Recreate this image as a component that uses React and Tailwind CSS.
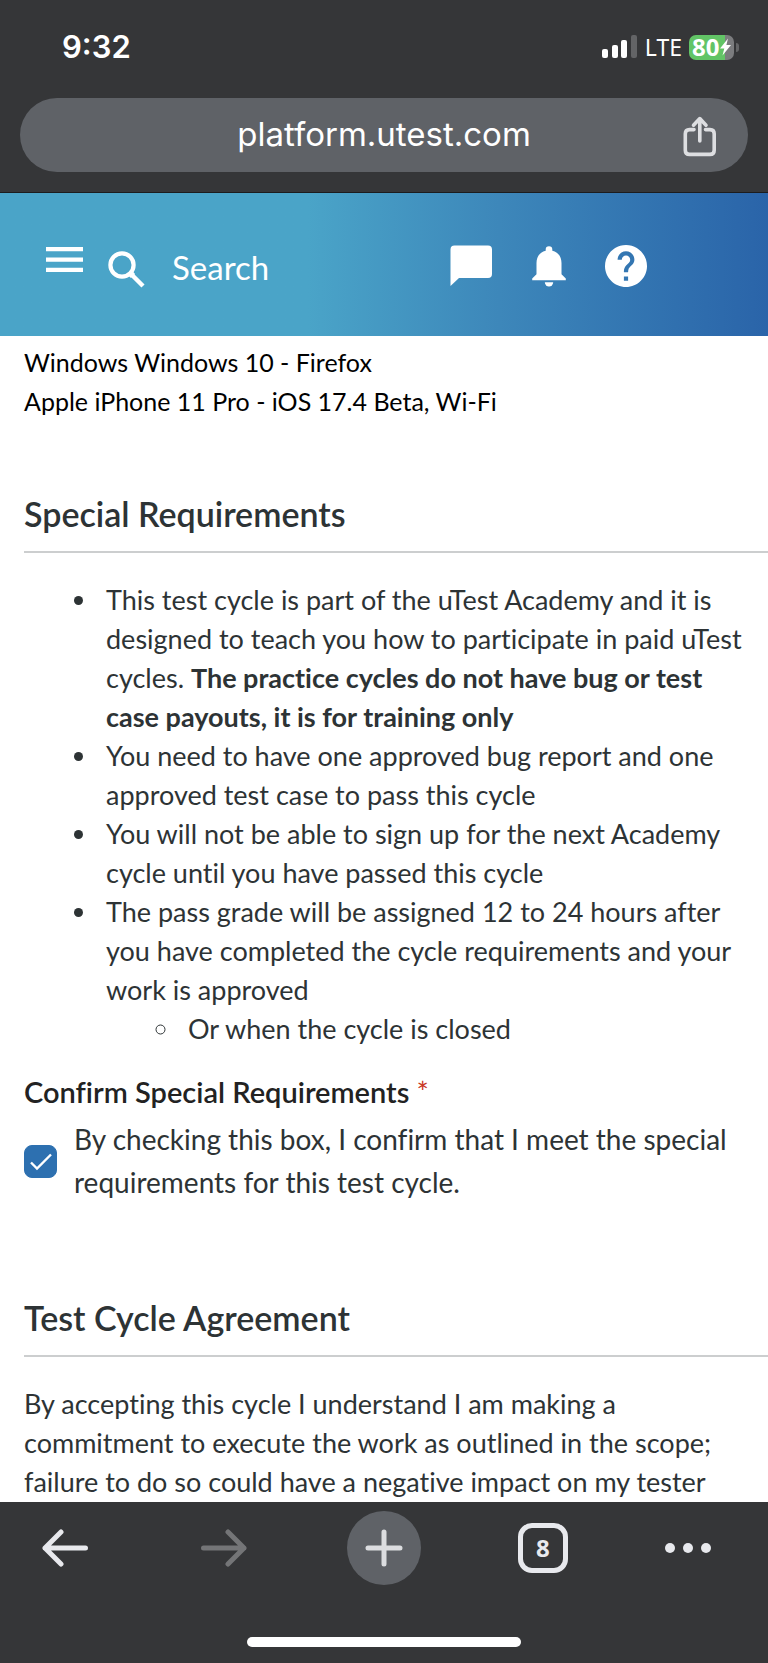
import React from "react";

function StatusBar() {
  return (
    <div className="flex h-[98px] items-start justify-between pt-[25px] pl-[62px] pr-[29px] text-white">
      <span className="font-['Inter',sans-serif] text-[31px] leading-[44px] font-semibold">9:32</span>
      <div className="flex h-[44px] items-center gap-[7px]">
        <svg width="36" height="24" viewBox="0 0 36 24" fill="#fff" aria-hidden="true">
          <rect x="0" y="14" width="6" height="9" rx="2" />
          <rect x="10" y="10" width="6" height="13" rx="2" />
          <rect x="19" y="5" width="6" height="18" rx="2" />
          <rect x="29" y="0" width="6" height="23" rx="2" fill="#636466" />
        </svg>
        <span className="font-['Noto_Sans',sans-serif] text-[23px] leading-6">LTE</span>
        <div className="flex items-center gap-[2px]">
          <div className="flex h-[25px] w-[45px] items-center rounded-[7px] bg-linear-to-r from-[#62c466] from-80% to-[#7b7c7e] to-80% pl-[3px]">
            <span className="font-['Open_Sans',sans-serif] text-2xl leading-6 font-bold">80</span>
            <svg width="12" height="18" viewBox="0 0 12 18" fill="#fff" aria-hidden="true">
              <path d="M9 0.5 1 10.5h4.3L3.5 17.5 12 7H7.4Z" />
            </svg>
          </div>
          <div className="h-[9px] w-[3px] rounded-r-full bg-[#636466]" />
        </div>
      </div>
    </div>
  );
}

function AddressBar() {
  return (
    <div className="mx-5 mb-5 grid h-[74px] grid-cols-[96px_1fr_96px] items-center rounded-full bg-[#5f6267] text-white">
      <a href="#url" className="col-start-2 pb-[2px] text-center font-['Inter',sans-serif] text-[33px] leading-10">
        platform.utest.com
      </a>
      <button type="button" aria-label="Share" className="flex h-full items-center justify-center pt-1">
        <svg width="34" height="42" viewBox="0 0 34 42" fill="none" stroke="#dddee1" strokeWidth="3.6" strokeLinecap="round" strokeLinejoin="round" aria-hidden="true">
          <path d="M11 13.6H6.5Q2.3 13.6 2.3 17.8V34.2Q2.3 38.4 6.5 38.4H27Q31.2 38.4 31.2 34.2V17.8Q31.2 13.6 27 13.6H22.5" />
          <path d="M16.8 25V3.5M10.5 9.2 16.8 2.6 23 9.2" />
        </svg>
      </button>
    </div>
  );
}

function SiteHeader() {
  return (
    <header className="flex h-[143px] items-center bg-linear-to-r from-[#4aa4c8] from-40% via-[#3d87ba] via-65% to-[#2a64a9] pl-[46px] text-white">
      <button type="button" aria-label="Menu" className="pb-[10px]">
        <svg width="37" height="26" viewBox="0 0 37 26" fill="#fff" aria-hidden="true">
          <path d="M0 0h37v4.3H0zM0 10.4h37v4.3H0zM0 20.8h37v4.3H0z" />
        </svg>
      </button>
      <label className="ml-6 flex min-w-0 flex-1 items-center gap-[27px] pt-2">
        <svg className="shrink-0" width="38" height="38" viewBox="0 0 38 38" fill="none" stroke="#fff" aria-hidden="true">
          <circle cx="15" cy="15" r="11.6" strokeWidth="4.2" />
          <path d="M23.5 23.5 36 36" strokeWidth="4.4" />
          <path d="M23 23l3 3" strokeWidth="6" />
        </svg>
        <input
          type="search"
          aria-label="Search"
          placeholder="Search"
          className="w-full min-w-0 bg-transparent pb-1 font-['Lato',sans-serif] text-[33px] leading-10 outline-none placeholder:text-white"
        />
      </label>
      <div className="mr-[121px] flex items-center gap-[39px] pt-[3px]">
        <button type="button" aria-label="Messages">
          <svg width="43" height="42" viewBox="0 0 43 42" fill="#fff" aria-hidden="true">
            <path d="M4.5 0.5H38Q42 0.5 42 4.5V29Q42 33 38 33H9L0.5 41V4.5Q0.5 0.5 4.5 0.5Z" />
          </svg>
        </button>
        <button type="button" aria-label="Notifications">
          <svg width="34" height="42" viewBox="0 0 34 42" fill="#fff" aria-hidden="true">
            <path d="M17 1.2a3.3 3.3 0 0 1 3.3 3.3V5.8C26.5 7.3 29.5 12 29.5 18V29.2L33.8 33.6V35.2H0.2V33.6L4.5 29.2V18C4.5 12 7.5 7.3 13.7 5.8V4.5A3.3 3.3 0 0 1 17 1.2Z" />
            <path d="M12.8 37.2H21.2A4.2 4.2 0 0 1 12.8 37.2Z" />
          </svg>
        </button>
        <button type="button" aria-label="Help">
          <svg width="42" height="42" viewBox="2 2 20 20" fill="#fff" aria-hidden="true">
            <path d="M12 2C6.48 2 2 6.48 2 12s4.48 10 10 10 10-4.48 10-10S17.52 2 12 2zm1 17h-2v-2h2v2zm2.07-7.75-.9.92C13.45 12.9 13 13.5 13 15h-2v-.5c0-1.1.45-2.1 1.17-2.83l1.24-1.26c.37-.36.59-.86.59-1.41 0-1.1-.9-2-2-2s-2 .9-2 2H8c0-2.21 1.79-4 4-4s4 1.79 4 4c0 .88-.36 1.68-.93 2.25z" />
          </svg>
        </button>
      </div>
    </header>
  );
}

function SectionTitle({ children }) {
  return (
    <h2 className="border-b-2 border-[#cccecf] pb-[17px] text-[34px] leading-10 font-semibold">{children}</h2>
  );
}

function Content() {
  return (
    <main className="flex-1 overflow-hidden bg-white pt-[7px] pl-6 font-['Lato',sans-serif] text-[27px] leading-[39px] text-[#2d3335] [font-variant-ligatures:none]">
      <p className="text-[25px] text-black">
        Windows Windows 10 - Firefox
        <br />
        Apple iPhone 11 Pro - iOS 17.4 Beta, Wi-Fi
      </p>

      <section className="mt-[73px]">
        <SectionTitle>Special Requirements</SectionTitle>
        <ul className="list-disc pt-[27px] pr-5 pl-[75px] [&_li]:pl-[7px]">
          <li>
            This test cycle is part of the uTest Academy and it is designed to teach you how to participate in paid
            uTest cycles.{" "}
            <strong className="font-bold">
              The practice cycles do not have bug or test case payouts, it is for training only
            </strong>
          </li>
          <li>You need to have one approved bug report and one approved test case to pass this cycle</li>
          <li>You will not be able to sign up for the next Academy cycle until you have passed this cycle</li>
          <li>
            The pass grade will be assigned 12 to 24 hours after you have completed the cycle requirements and your
            work is approved
            <ul className="list-[circle] pl-[75px]">
              <li>Or when the cycle is closed</li>
            </ul>
          </li>
        </ul>

        <fieldset className="mt-6">
          <legend className="text-[29px] font-semibold text-[#222]">
            Confirm Special Requirements <span className="font-normal text-[#c9371f]">*</span>
          </legend>
          <div className="mt-[7px] flex items-center gap-[17px] pr-5">
            <span className="grid shrink-0">
              <input
                id="confirm"
                type="checkbox"
                defaultChecked
                className="peer col-start-1 row-start-1 size-[33px] appearance-none rounded-lg border border-[#2d70b0] checked:bg-[#2d70b0]"
              />
              <svg className="pointer-events-none col-start-1 row-start-1 hidden size-[33px] peer-checked:block" viewBox="0 0 33 33" fill="none" stroke="#fff" strokeWidth="2.4" aria-hidden="true">
                <path d="M7 17.5 13 23.5 27 9.5" />
              </svg>
            </span>
            <label htmlFor="confirm" className="text-[28px] leading-[43px]">
              By checking this box, I confirm that I meet the special requirements for this test cycle.
            </label>
          </div>
        </fieldset>
      </section>

      <section className="mt-[94px]">
        <SectionTitle>Test Cycle Agreement</SectionTitle>
        <p className="pt-[27px] pr-10">
          By accepting this cycle I understand I am making a commitment to execute the work as outlined in the scope;
          failure to do so could have a negative impact on my tester
        </p>
      </section>
    </main>
  );
}

function Toolbar() {
  return (
    <footer className="flex h-[161px] flex-col items-center justify-between bg-[#353638] pt-[9px] pb-4">
      <nav aria-label="Browser" className="flex h-[74px] w-full items-center justify-between pr-[57px] pl-7">
        <button type="button" aria-label="Back" className="flex w-[74px] justify-center">
          <svg width="46" height="38" viewBox="0 0 46 38" fill="none" stroke="#e8e9ed" strokeWidth="5" strokeLinecap="round" strokeLinejoin="round" aria-hidden="true">
            <path d="M43.5 19H3M19 3 3 19l16 16" />
          </svg>
        </button>
        <button type="button" aria-label="Forward" className="flex w-[74px] justify-center">
          <svg width="46" height="38" viewBox="0 0 46 38" fill="none" stroke="#747577" strokeWidth="5" strokeLinecap="round" strokeLinejoin="round" aria-hidden="true">
            <path d="M2.5 19H43M27 3l16 16-16 16" />
          </svg>
        </button>
        <button type="button" aria-label="New tab" className="flex size-[74px] items-center justify-center rounded-full bg-[#5f6267]">
          <svg width="38" height="38" viewBox="0 0 38 38" fill="none" stroke="#dcdde0" strokeWidth="5" strokeLinecap="round" aria-hidden="true">
            <path d="M19 3v32M3 19h32" />
          </svg>
        </button>
        <button type="button" aria-label="Show 8 tabs" className="flex w-[74px] justify-center">
          <span className="flex size-[50px] items-center justify-center rounded-[14px] border-[5px] border-[#e8e9ed] font-['Noto_Sans',sans-serif] text-2xl leading-6 font-bold text-[#e8e9ed]">
            8
          </span>
        </button>
        <button type="button" aria-label="More" className="flex w-[46px] justify-between">
          <span className="size-[10px] rounded-full bg-[#e8e9ed]" />
          <span className="size-[10px] rounded-full bg-[#e8e9ed]" />
          <span className="size-[10px] rounded-full bg-[#e8e9ed]" />
        </button>
      </nav>
      <div className="h-[10px] w-[274px] rounded-full bg-white" />
    </footer>
  );
}

export default function App() {
  return (
    <div className="flex min-h-screen flex-col">
      <div className="border-b border-[#1c1c1e] bg-[#353638]">
        <StatusBar />
        <AddressBar />
      </div>
      <SiteHeader />
      <Content />
      <Toolbar />
    </div>
  );
}
